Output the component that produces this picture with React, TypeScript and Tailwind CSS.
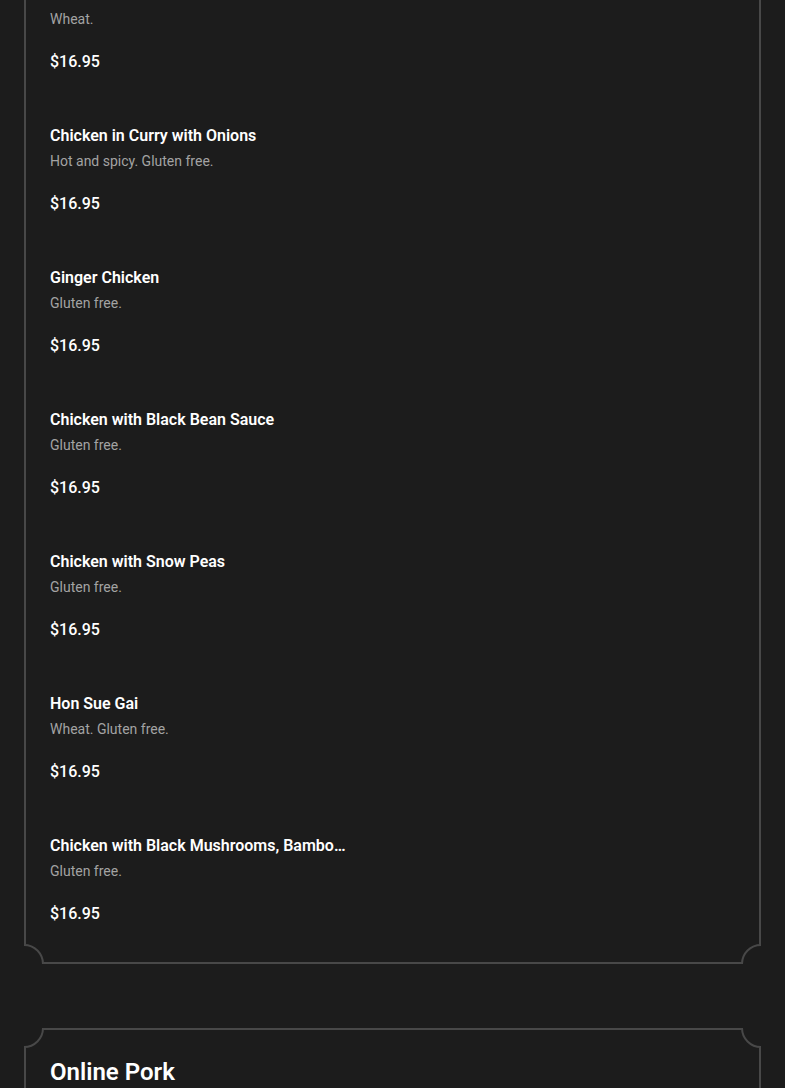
const chicken = [
  { name: "Chicken with Broccoli", desc: "Wheat.", price: "$16.95" },
  { name: "Chicken in Curry with Onions", desc: "Hot and spicy. Gluten free.", price: "$16.95" },
  { name: "Ginger Chicken", desc: "Gluten free.", price: "$16.95" },
  { name: "Chicken with Black Bean Sauce", desc: "Gluten free.", price: "$16.95" },
  { name: "Chicken with Snow Peas", desc: "Gluten free.", price: "$16.95" },
  { name: "Hon Sue Gai", desc: "Wheat. Gluten free.", price: "$16.95" },
  {
    name: "Chicken with Black Mushrooms, Bamboo Shoots and Water Chestnuts",
    desc: "Gluten free.",
    price: "$16.95",
  },
];

// inverted (scooped) corners drawn over the card border
const Corners = () => (
  <>
    <span className="absolute -left-5 -top-5 w-10 h-10 rounded-full border-2 border-[#484848] bg-[#1c1c1c]" />
    <span className="absolute -right-5 -top-5 w-10 h-10 rounded-full border-2 border-[#484848] bg-[#1c1c1c]" />
    <span className="absolute -left-5 -bottom-5 w-10 h-10 rounded-full border-2 border-[#484848] bg-[#1c1c1c]" />
    <span className="absolute -right-5 -bottom-5 w-10 h-10 rounded-full border-2 border-[#484848] bg-[#1c1c1c]" />
  </>
);

const MenuCard = ({ className, children }: { className?: string; children: React.ReactNode }) => (
  <div className={`relative overflow-hidden ${className ?? ""}`}>
    <div className="border-2 border-[#484848] px-6 pt-[25px] pb-9">{children}</div>
    <Corners />
  </div>
);

const MenuItem = ({ name, desc, price }: { name: string; desc: string; price: string }) => (
  <div className="flex flex-col">
    <h3 className="w-[298px] truncate text-base leading-6 font-semibold text-white">{name}</h3>
    <p className="mt-[3px] text-sm leading-5 text-[#a3a3a3]">{desc}</p>
    <p className="mt-[21px] text-base leading-6 font-medium text-white">{price}</p>
  </div>
);

const App = () => {
  return (
    <div className="h-[1088px] overflow-hidden bg-[#1c1c1c] px-6 font-['Roboto',sans-serif]">
      <MenuCard className="mt-[-45px]">
        <div className="flex flex-col gap-[50px]">
          {chicken.map((item) => (
            <MenuItem key={item.name} {...item} />
          ))}
        </div>
      </MenuCard>

      <MenuCard className="mt-16">
        <h2 className="pt-px text-2xl leading-8 font-semibold text-white">Online Pork</h2>
        <div className="h-40" />
      </MenuCard>
    </div>
  );
};

export default App;
